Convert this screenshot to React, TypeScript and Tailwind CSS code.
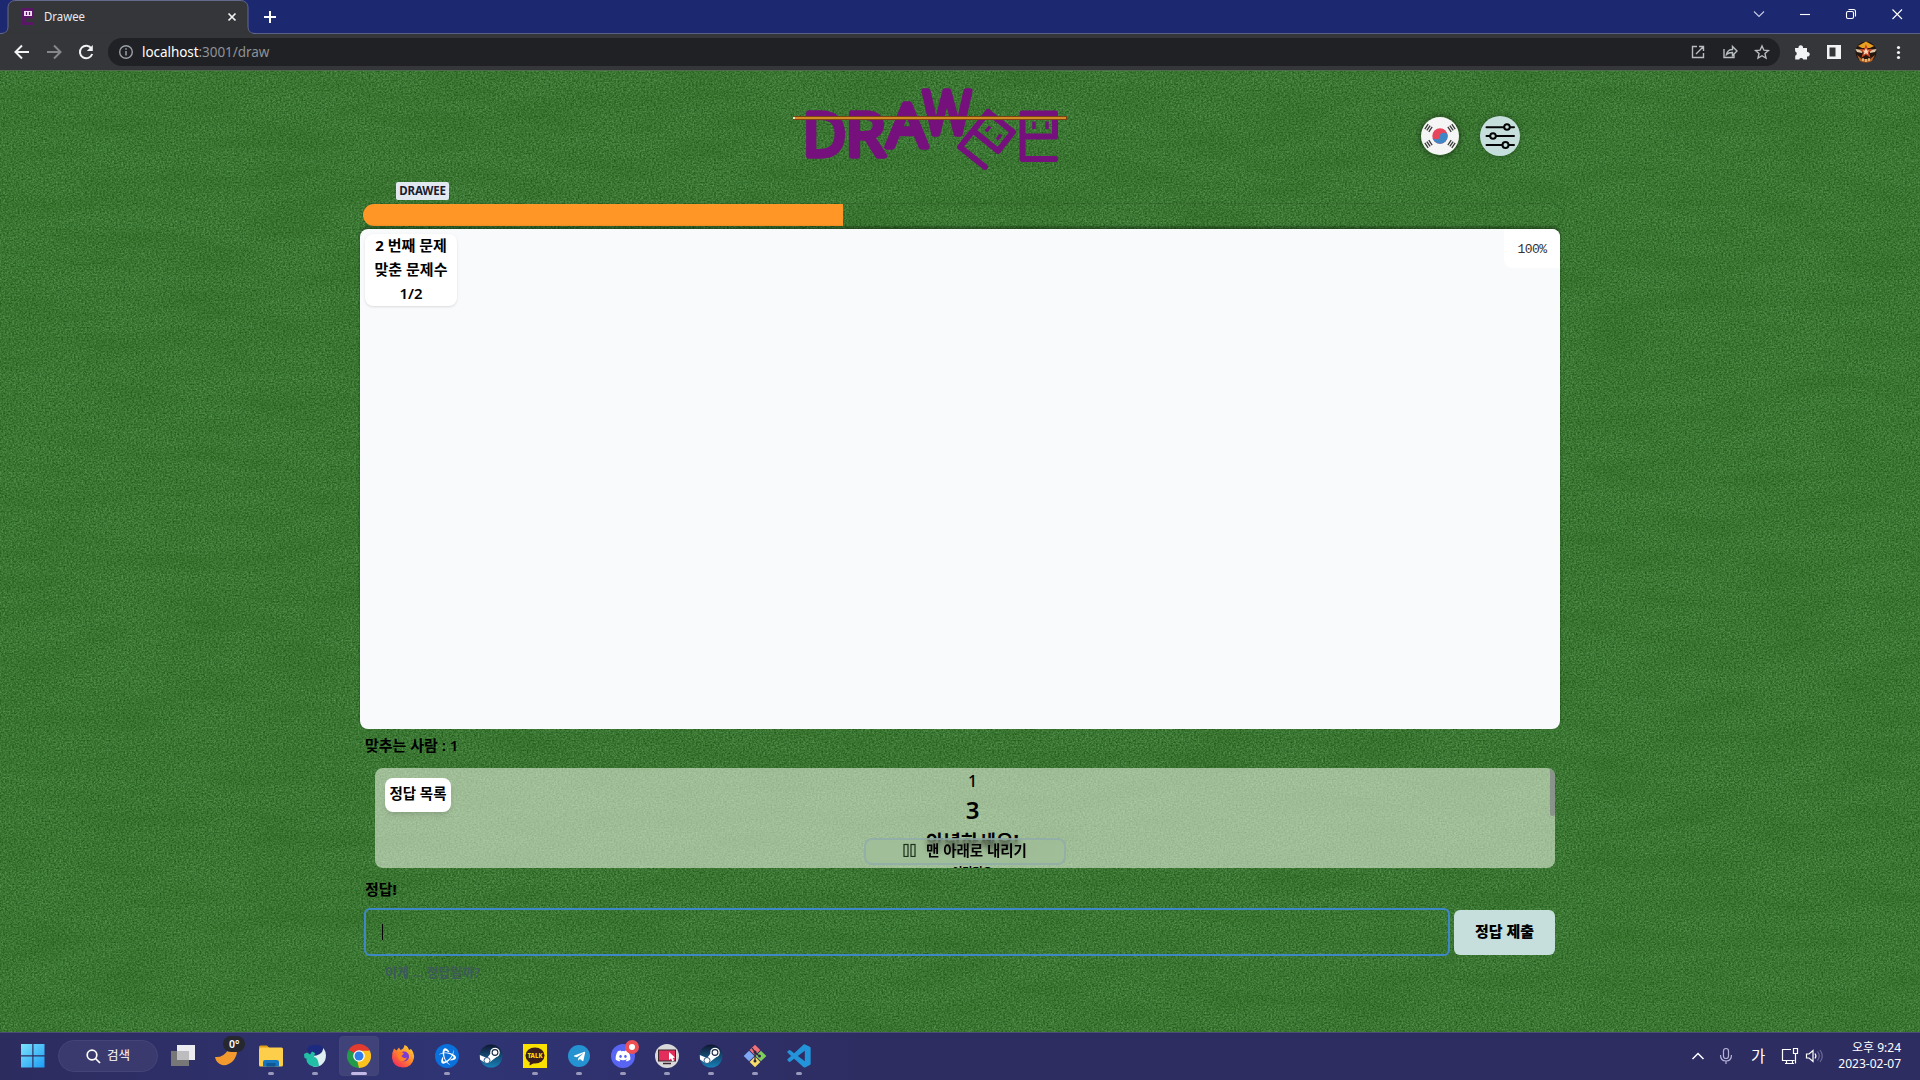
import React from "react";
import { FaDiscord, FaTelegramPlane } from "react-icons/fa";
import { SiBattledotnet } from "react-icons/si";
import { BiLogoVisualStudio } from "react-icons/bi";

const UI = "font-['Noto_Sans','Noto_Sans_CJK_KR',sans-serif]";
const KR = "font-['Noto_Sans','Noto_Sans_CJK_KR',sans-serif]";

function Grass() {
  return (
    <svg className="absolute inset-0 h-full w-full" aria-hidden="true">
      <defs>
        <filter id="weave" x="0" y="0" width="100%" height="100%" colorInterpolationFilters="sRGB">
          <feTurbulence type="fractalNoise" baseFrequency="0.55 0.62" numOctaves="2" seed="4" result="n" />
          <feColorMatrix
            in="n"
            type="matrix"
            values="0.32 0 0 0 0.075  0.34 0 0 0 0.30  0.30 0 0 0 0.055  0 0 0 0 1"
          />
        </filter>
        <filter id="bands" x="0" y="0" width="100%" height="100%" colorInterpolationFilters="sRGB">
          <feTurbulence type="fractalNoise" baseFrequency="0.012 0.05" numOctaves="3" seed="9" />
          <feColorMatrix type="matrix" values="0 0 0 0 0.14  0 0 0 0 0.36  0 0 0 0 0.08  0.45 0 0 0 -0.16" />
        </filter>
      </defs>
      <rect width="100%" height="100%" filter="url(#weave)" />
      <rect width="100%" height="100%" filter="url(#bands)" />
    </svg>
  );
}

function Logo() {
  return (
    <svg width="280" height="100" viewBox="790 80 280 100" className="block">
      <g
        fill="#75107c"
        stroke="#75107c"
        strokeWidth="5.500"
        strokeLinejoin="round"
        strokeLinecap="round"
        fontFamily="'Open Sans', sans-serif"
        fontWeight="500"
        fontSize="61"
      >
        <text x="803" y="155.500" textLength="43" lengthAdjust="spacingAndGlyphs">D</text>
        <text x="845.500" y="155.500" textLength="40" lengthAdjust="spacingAndGlyphs">R</text>
        <text x="887" y="147" textLength="40" lengthAdjust="spacingAndGlyphs">A</text>
        <text x="923" y="133.500" textLength="48" lengthAdjust="spacingAndGlyphs">W</text>
      </g>
      <g fill="none" stroke="#75107c" strokeWidth="6" strokeLinecap="round" strokeLinejoin="round">
        <path d="M985 167 L960 147 L988 112 L1013 132 L998 151 L976 133" />
        <path d="M1055 159 H1022.500 V113.500 H1055 V136.500 H1024" />
      </g>
      <path d="M990 126.500 l-4 5 M1001 134.500 l-4 5 M1034 121.500 v7.500 M1047 121.500 v7.500" stroke="#75107c" strokeWidth="3.500" />
      <path d="M793 118 H1067" stroke="#7a4212" strokeWidth="4" />
      <path d="M794 118 H1066" stroke="#d08a26" strokeWidth="2" />
      <rect x="793" y="117" width="2" height="2" fill="#f3e3c0" />
    </svg>
  );
}

function Flag() {
  const bars = (x: number, y: number, r: number) => (
    <path d="M-3 -2.400 H3 M-3 0 H3 M-3 2.400 H3" transform={`translate(${x} ${y}) rotate(${r})`} stroke="#3a3a3a" strokeWidth="1.300" />
  );
  return (
    <svg width="38" height="38" viewBox="0 0 38 38" className="block">
      <circle cx="19" cy="19" r="19" fill="#f5f5f5" />
      <circle cx="19" cy="19" r="7.700" fill="#e8455b" />
      <path d="M11.300 19 a3.850 3.200 0 0 0 7.700 0 a3.850 3.200 0 0 1 7.700 0 a7.700 7.700 0 0 1 -15.400 0" fill="#3f86c4" />
      {bars(7.5, 11, -56)}
      {bars(30.5, 11, 56)}
      {bars(7.5, 27, 56)}
      {bars(30.5, 27, -56)}
    </svg>
  );
}

function Sliders() {
  return (
    <svg width="40" height="40" viewBox="0 0 40 40" className="block">
      <g stroke="#050505" strokeWidth="2" strokeLinecap="round" fill="#c6dfdc">
        <path d="M6.500 11.300 H34 M6.500 20 H34 M6.500 29 H34" />
        <circle cx="27" cy="11" r="2.800" />
        <circle cx="13" cy="20" r="2.800" />
        <circle cx="25.500" cy="29" r="3" />
      </g>
    </svg>
  );
}

function BrowserChrome() {
  return (
    <div className={`flex h-[70px] flex-col ${UI}`}>
      <div className="flex h-[34px] items-end border-b border-[#5a6088] bg-[#1c286f]">
        <svg width="256" height="34" viewBox="0 0 256 34" className="-mb-px block shrink-0">
          <path d="M0 33.500 C6 33.500 8 31 8 26 V8 C8 3 11 .5 16 .5 H240 C245 .5 248 3 248 8 V26 C248 31 250 33.500 256 33.500 V35 H0Z" fill="#35363a" stroke="#646a8c" />
          <path d="M4 33.500 H252" stroke="#35363a" strokeWidth="1.500" />
          <rect x="22" y="8" width="12" height="17" fill="#5b1767" />
          <rect x="24" y="11" width="8" height="5" fill="#f4dcf4" />
          <path d="M26.500 12 v3 M29.500 12 v3" stroke="#5b1767" strokeWidth="1.200" />
          <path d="M25 18.500 H34 V22 H25Z" fill="#35363a" />
          <text x="44" y="21" fill="#e8eaed" fontSize="12.500" textLength="41" lengthAdjust="spacingAndGlyphs">Drawee</text>
          <path d="M228.500 13.500 l7 7 M235.500 13.500 l-7 7" stroke="#f2f2f2" strokeWidth="1.700" />
        </svg>
        <svg width="30" height="33" viewBox="0 0 30 33" className="block">
          <path d="M14 11 V23 M8 17 H20" stroke="#fff" strokeWidth="2" />
        </svg>
        <svg width="180" height="33" viewBox="1740 0 180 33" className="ml-auto block" fill="none" stroke="#fff" strokeWidth="1.100">
          <path d="M1754 11.500 l5 5 l5 -5" stroke="#c9cde4" />
          <path d="M1800 14.500 h10" />
          <rect x="1846.500" y="11.500" width="7" height="7" rx="1.500" />
          <path d="M1848.500 9.500 h5 q2 0 2 2 v5" />
          <path d="M1892.500 9.500 l9.500 9.500 M1902 9.500 l-9.500 9.500" />
        </svg>
      </div>
      <div className="flex h-9 items-center bg-[#35363a]">
        <svg width="108" height="36" viewBox="0 34 108 36" className="block shrink-0" fill="none" strokeWidth="2">
          <path d="M29 52 H16 M22 45.500 L15.500 52 L22 58.500" stroke="#f1f3f4" />
          <path d="M47 52 H60 M54 45.500 L60.500 52 L54 58.500" stroke="#85878a" />
          <path d="M91.500 48.500 A6.300 6.300 0 1 0 92.200 54" stroke="#f1f3f4" />
          <path d="M92.800 45 V51 H86.800Z" fill="#f1f3f4" />
        </svg>
        <div className="flex h-7 w-[1672px] items-center rounded-full bg-[#202124]">
          <svg width="34" height="28" viewBox="0 0 34 28" className="block">
            <circle cx="18" cy="14" r="6.300" fill="none" stroke="#9aa0a6" strokeWidth="1.400" />
            <path d="M18 13 V17.500 M18 10.200 V11.800" stroke="#9aa0a6" strokeWidth="1.500" />
          </svg>
          <span className="w-[127px] text-[13.5px] tracking-[-0.06px] whitespace-nowrap text-[#8e9297]">
            <span className="text-white">localhost</span>:3001/draw
          </span>
          <svg width="90" height="28" viewBox="1690 38 90 28" className="ml-auto block" fill="none" stroke="#b9bcc0" strokeWidth="1.400">
            <path d="M1697 46.500 h-4.500 v11 h11 v-4.500 M1699 46.500 h4.500 v4.500 M1703 47 l-7 7" />
            <path d="M1724 49 v8.500 h10 v-3 M1726.500 54.500 q1 -5 6 -5 v-3 l4.500 4.500 l-4.500 4.500 v-3 q-4 0 -6 2z" />
            <path d="M1762 46 l1.900 4.200 l4.500 .4 l-3.400 3 l1 4.500 l-4 -2.400 l-4 2.400 l1 -4.500 l-3.400 -3 l4.500 -.4z" />
          </svg>
        </div>
        <svg width="140" height="36" viewBox="1780 34 140 36" className="block">
          <path d="M1795 48 h3.500 a2.300 2.300 0 1 1 4.500 0 h4 v4 a2.300 2.300 0 1 1 0 4.500 v3 h-3.800 a2.100 2.100 0 0 0 -4 0 h-4 v-3.700 a2.200 2.200 0 0 0 0 -4.200z" fill="#f1f3f4" />
          <path d="M1827 45 h14 v14 h-14z M1829.500 47.500 v9 h6 v-9z" fill="#f1f3f4" fillRule="evenodd" />
          <circle cx="1866" cy="52" r="10.500" fill="#24150f" />
          <path d="M1858 46 L1866 41.500 L1874 46 L1870 48 H1862Z" fill="#e9a021" />
          <path d="M1857 55 L1862 59 H1870 L1875 55 L1872 61 Q1866 64 1860 61Z" fill="#b5652a" />
          <path d="M1855.500 49 L1863 50 L1862 53 L1857 52Z M1876.500 49 L1869 50 L1870 53 L1875 52Z" fill="#d9c9a8" />
          <path d="M1866 46 l1.500 3.800 h3.900 l-3.100 2.500 l1.200 4 l-3.500 -2.400 l-3.500 2.400 l1.200 -4 l-3.100 -2.500 h3.900z" fill="#ffd9b8" stroke="#c2401f" strokeWidth="1.200" />
          <path d="M1863 58 v3 M1869 58 v3 M1866 59 v3" stroke="#ffe3a0" strokeWidth="1.200" />
          <circle cx="1898.500" cy="47.500" r="1.600" fill="#f1f3f4" />
          <circle cx="1898.500" cy="52.500" r="1.600" fill="#f1f3f4" />
          <circle cx="1898.500" cy="57.500" r="1.600" fill="#f1f3f4" />
        </svg>
      </div>
    </div>
  );
}

function Game() {
  return (
    <main className={`relative h-[962px] overflow-hidden border-t border-[#4d6b4d] bg-[#3b7633] text-black ${KR}`}>
      <Grass />
      <div className="relative mx-auto flex w-[1200px] flex-col">
        <header className="flex h-[111px] items-start pt-[9px]">
          <div className="ml-[430px]">
            <Logo />
          </div>
          <button className="mt-[37px] ml-[351px] rounded-full shadow-[0_0_6px_1px_rgba(0,0,0,0.45)]">
            <Flag />
          </button>
          <button className="mt-[36px] ml-[21px] rounded-full bg-[#c6dfdc] shadow-[0_0_6px_rgba(0,0,0,0.3)]">
            <Sliders />
          </button>
        </header>

        <div className="ml-9 flex h-[18px] w-[53px] items-center justify-center rounded-[2px] bg-[#e2e8f0] text-[11.5px] font-bold tracking-[-0.2px] text-[#1a202c]">
          DRAWEE
        </div>
        <div className="mt-1 ml-[3px] h-[22px] w-[1200px] overflow-hidden rounded-full shadow-[0_0_2px_rgba(0,0,0,0.35)]">
          <div className="h-full w-[480px] bg-[#ff9626]" />
        </div>

        <section className="mt-[3px] flex h-[500px] items-start justify-between overflow-hidden rounded-lg bg-[#f8fafc] shadow-[0_-2px_3px_rgba(0,0,0,0.4)]">
          <div className="mt-[5px] ml-[5px] flex h-[72px] w-[92px] flex-col items-center justify-center rounded-lg bg-white pb-[3px] text-[15px] leading-6 font-bold shadow">
            <span className="whitespace-nowrap">2 번째 문제</span>
            <span className="whitespace-nowrap">맞춘 문제수</span>
            <span className="font-semibold">1/2</span>
          </div>
          <div className="flex h-[39px] w-[56px] items-center justify-center rounded-bl-lg bg-white text-[#333]">
            <span className="pt-0.5 font-['Liberation_Mono',monospace] text-[13px] tracking-[-0.6px]">100%</span>
          </div>
        </section>

        <p className="mt-1 ml-[5px] h-6 text-[15px] leading-6 font-semibold">맞추는 사람 : 1</p>

        <section className="relative mt-[11px] ml-[15px] h-[100px] w-[1180px] overflow-hidden rounded-lg bg-[#f2f7ea]/55">
          <div className="flex flex-col items-center pl-[15px]">
            <span className="h-[26px] text-[16px] leading-[26px] font-medium">1</span>
            <span className="h-8 text-[24px] leading-8 font-semibold">3</span>
            <span className="h-8 text-[19px] leading-8 font-bold">안녕하세요!</span>
            <span className="mt-0.5 h-6 text-[11px] leading-6 font-bold">어리리요</span>
          </div>
          <div className="absolute top-[10px] left-[10px] flex h-[34px] w-[66px] items-center justify-center rounded-lg bg-white pb-0.5 text-[14.5px] font-bold whitespace-nowrap shadow-md">
            정답 목록
          </div>
          <button className="absolute top-[70px] left-[489px] flex h-[27px] w-[202px] items-center justify-center gap-2.5 rounded-lg border-2 border-[#8fa9ad]/70 bg-[#a2c09c]/30 pb-[3px] text-[14.5px] font-bold backdrop-blur-[3px]">
            <svg width="13" height="14" viewBox="0 0 13 14" fill="none" stroke="#1c301c" strokeWidth="1.200">
              <rect x="1" y="1.500" width="4" height="12" />
              <rect x="8" y="1.500" width="4" height="12" />
            </svg>
            <span className="leading-5 whitespace-nowrap">맨 아래로 내리기</span>
          </button>
          <div className="absolute top-0 right-0 h-12 w-[5px] rounded-full bg-[#8a938a]" />
        </section>

        <p className="mt-[9px] ml-[5px] h-6 text-[15px] leading-6 font-bold">정답!</p>
        <div className="mt-[7px] ml-1 flex items-center gap-1">
          <div className="flex h-[48px] w-[1086px] items-center rounded-md border-2 border-[#3f88c8] pl-4">
            <span className="h-4 w-px bg-black" />
          </div>
          <button className="h-[45px] w-[101px] rounded-md bg-[#c6dfdc] pb-0.5 text-[15px] font-black whitespace-nowrap">정답 제출</button>
        </div>
        <p className="mt-[4px] ml-[25px] h-6 text-[13px] leading-6 font-semibold text-[#3f5560]/90">이게 ... 정답일까?</p>
      </div>
    </main>
  );
}

function Steam() {
  return (
    <svg width="24" height="24" viewBox="0 0 24 24">
      <defs>
        <linearGradient id="steam" x1="0" y1="0" x2="0" y2="1">
          <stop offset="0" stopColor="#10162f" />
          <stop offset="1" stopColor="#1780b8" />
        </linearGradient>
      </defs>
      <circle cx="12" cy="12" r="11.500" fill="url(#steam)" />
      <path d="M.8 11 L8 14 L12 9 L20 11 L11 18 L7 19.500 L1 15.500Z" fill="#fff" />
      <circle cx="16" cy="8.500" r="4.800" fill="#fff" />
      <circle cx="16" cy="8.500" r="2.900" fill="#fff" stroke="#1b2a48" strokeWidth="1.100" />
      <circle cx="8" cy="16.500" r="3" fill="#fff" stroke="#1b4a78" strokeWidth=".9" />
    </svg>
  );
}

function Chrome() {
  return (
    <svg width="24" height="24" viewBox="0 0 24 24">
      <path d="M12 12 L1.600 6 A12 12 0 0 1 22.400 6Z" fill="#e33b2e" />
      <path d="M12 12 L22.400 6 A12 12 0 0 1 12 24Z" fill="#fcc31e" />
      <path d="M12 12 V24 A12 12 0 0 1 1.600 6Z" fill="#229a4a" />
      <path d="M12 6.400 H22.600 L17 14.500Z" fill="#fcc31e" />
      <path d="M12 6.400 H22.600 L22.400 6 A12 12 0 0 0 20 3 L12 4Z" fill="#e33b2e" />
      <path d="M16.900 14.800 L12 24 L10 16Z" fill="#fcc31e" />
      <circle cx="12" cy="12" r="5.800" fill="#fff" />
      <circle cx="12" cy="12" r="4.500" fill="#2f7de9" />
    </svg>
  );
}

function Firefox() {
  return (
    <svg width="24" height="24" viewBox="0 0 24 24">
      <defs>
        <linearGradient id="fox" x1="1" y1="0" x2="0.200" y2="1">
          <stop offset="0" stopColor="#ffe23e" />
          <stop offset=".5" stopColor="#ff8a2a" />
          <stop offset="1" stopColor="#f5275f" />
        </linearGradient>
      </defs>
      <path d="M3 4.500 L5.500 6.500 L8 3.500 L9.500 6 Q13 5 13.500 1 Q17 2 18 6 L20 5 Q23.500 9 23 14 Q21 23.500 12 23.500 Q2 23 1 14 Q.6 9 3 4.500Z" fill="url(#fox)" />
      <circle cx="13" cy="12.500" r="5" fill="#7b3bd6" />
      <path d="M6 9 Q10 7 13 9.500 L10.500 12 Q12 15 16 13.500 Q14 18 10 17 Q6 15 6 9Z" fill="#ff8124" />
    </svg>
  );
}

const apps: { icon: React.ReactNode; mark?: "dot" | "bar" }[] = [
  {
    icon: (
      <svg width="26" height="24" viewBox="0 0 26 24">
        <rect x="1" y="7" width="18" height="15" fill="#777778" />
        <rect x="7" y="1" width="18" height="15" fill="#ececf0" />
        <rect x="7" y="7" width="12" height="9" fill="#bdbdc0" />
      </svg>
    ),
  },
  {
    icon: (
      <svg width="36" height="34" viewBox="1 0 36 34" className="-translate-y-1">
        <path d="M7 22 Q15 23 20 15 L29 16 Q29 21 25 26 Q20 31 14 30 Q8 28 7 22Z" fill="#f29a2e" />
        <rect x="15" y="1" width="22" height="16" rx="8" fill="#272730" />
        <text x="21" y="13" fill="#fff" fontSize="10.500" fontFamily="Noto Sans, sans-serif" fontWeight="600">0°</text>
      </svg>
    ),
  },
  {
    icon: (
      <svg width="26" height="24" viewBox="0 0 26 24">
        <path d="M1 3 Q1 1.500 2.500 1.500 H9 L11.500 4 H1Z" fill="#e09d17" />
        <rect x="1" y="3.500" width="24" height="19" rx="1.500" fill="#fcce49" />
        <path d="M5 22.500 V18 Q5 16 7 16 H19 Q21 16 21 18 V22.500Z" fill="#1675c0" />
        <rect x="8.500" y="19" width="9" height="3.500" fill="#0d5795" />
      </svg>
    ),
    mark: "dot",
  },
  {
    icon: (
      <svg width="24" height="24" viewBox="0 0 24 24">
        <path d="M4 6 Q5 1 9 1.500 Q17 -1 20 4 Q19 9 14 11 L8 11Z" fill="#1c2a80" />
        <path d="M9 12 Q19 12 20.500 4 Q24.500 10 22 16.500 Q18 24 10 22.500Z" fill="#dff0f0" />
        <path d="M1.500 14 L1 10 L4 8.500 L7 10.500 L9 7.500 L12 9 L11 13 Q15 13 16 22 Q11 24 6.500 21 Q3 18 3.500 14.500Z" fill="#21bfa5" />
      </svg>
    ),
    mark: "dot",
  },
  { icon: <Chrome />, mark: "bar" },
  { icon: <Firefox /> },
  {
    icon: (
      <span className="flex h-6 w-6 items-center justify-center rounded-full bg-[#0a70dc]">
        <SiBattledotnet size={17} color="#fff" />
      </span>
    ),
    mark: "dot",
  },
  { icon: <Steam /> },
  {
    icon: (
      <svg width="24" height="24" viewBox="0 0 24 24">
        <rect width="24" height="24" fill="#fae100" />
        <ellipse cx="12" cy="11.500" rx="9.500" ry="8" fill="#3a1d1d" />
        <path d="M7 16 L6.500 21.500 L13 18Z" fill="#3a1d1d" />
        <text x="4.500" y="14" fill="#fae100" fontSize="6.500" fontWeight="800" fontFamily="Noto Sans, sans-serif" textLength="15" lengthAdjust="spacingAndGlyphs">TALK</text>
      </svg>
    ),
    mark: "dot",
  },
  {
    icon: (
      <span className="flex h-[22px] w-[22px] items-center justify-center rounded-full bg-[#2593d1]">
        <FaTelegramPlane size={13} color="#fff" />
      </span>
    ),
    mark: "dot",
  },
  {
    icon: (
      <span className="relative flex h-6 w-6 items-center justify-center rounded-full bg-[#5865f2]">
        <FaDiscord size={16} color="#fff" />
        <span className="absolute -top-1 left-[14px] flex h-[14px] w-[14px] items-center justify-center rounded-full bg-[#ee4f55]">
          <span className="h-1.5 w-1.5 rounded-full bg-white" />
        </span>
      </span>
    ),
    mark: "dot",
  },
  {
    icon: (
      <svg width="24" height="24" viewBox="0 0 24 24">
        <circle cx="12" cy="12" r="12" fill="#d9d9da" />
        <rect x="3.500" y="6" width="17" height="11" fill="#e32d5b" stroke="#3d2730" strokeWidth="1" />
        <path d="M8 19.500 H16" stroke="#3d2730" strokeWidth="1.500" />
        <path d="M14 8 V16 L16 14.500 L17.500 17.500 L19 16.500 L17.800 14 L20 13.500Z" fill="#fff" />
      </svg>
    ),
    mark: "dot",
  },
  { icon: <Steam />, mark: "dot" },
  {
    icon: (
      <svg width="24" height="24" viewBox="0 0 24 24">
        <g transform="rotate(45 12 12)">
          <rect x="4" y="4" width="7.600" height="7.600" fill="#f07178" />
          <rect x="12.400" y="4" width="7.600" height="7.600" fill="#7fce5c" />
          <rect x="4" y="12.400" width="7.600" height="7.600" fill="#7fa8f5" />
          <rect x="12.400" y="12.400" width="7.600" height="7.600" fill="#f8dd6a" />
        </g>
        <path d="M9 4 L12 8 V17 M12 8 L16 12" stroke="#2b2640" strokeWidth="1.200" fill="none" />
        <circle cx="12" cy="17" r="1.500" fill="#2b2640" />
        <circle cx="12" cy="8" r="1.500" fill="#2b2640" />
        <circle cx="16.500" cy="12" r="1.500" fill="#2b2640" />
      </svg>
    ),
    mark: "dot",
  },
  { icon: <BiLogoVisualStudio size={28} color="#2494da" />, mark: "dot" },
];

function Taskbar() {
  return (
    <footer className={`flex h-12 items-center border-t border-[#4c4a76] bg-linear-to-r from-[#2d2c5f] via-[#2f3474] via-[24%] to-[#2e2d62] to-[45%] pb-px text-white ${UI}`}>
      <svg width="24" height="24" viewBox="0 0 24 24" className="ml-[21px] block">
        <defs>
          <linearGradient id="win" x1="0" y1="0" x2="1" y2="1">
            <stop offset="0" stopColor="#7be3fb" />
            <stop offset="1" stopColor="#1c9cf5" />
          </linearGradient>
        </defs>
        <path d="M0 0 H11.300 V11.300 H0Z M12.500 0 H23.500 V11.300 H12.500Z M0 12.500 H11.300 V23.500 H0Z M12.500 12.500 H23.500 V23.500 H12.500Z" fill="url(#win)" />
      </svg>
      <div className="ml-[13px] flex h-8 w-[100px] items-center justify-center gap-1.5 rounded-full border border-[#45447a] bg-[#3b3a6e] text-[12.5px]">
        <svg width="15" height="15" viewBox="0 0 15 15" fill="none" stroke="#fff" strokeWidth="1.700">
          <circle cx="6" cy="6" r="4.800" />
          <path d="M9.500 9.500 L14 14" />
        </svg>
        <span className="whitespace-nowrap">검색</span>
      </div>
      <div className="ml-[3px] flex">
        {apps.map((a, i) => (
          <div key={i} className="flex h-[46px] w-11 items-center justify-center">
            <div className={`relative flex h-10 w-10 items-center justify-center rounded ${a.mark === "bar" ? "border border-[#454678] bg-[#404379]" : ""}`}>
              {a.icon}
              {a.mark === "dot" && <span className="absolute bottom-px h-[3px] w-1.5 rounded-full bg-[#9a99bb]" />}
              {a.mark === "bar" && <span className="absolute bottom-0 h-[3px] w-4 rounded-full bg-[#c3b8e6]" />}
            </div>
          </div>
        ))}
      </div>
      <svg width="136" height="46" viewBox="1688 1033 136 46" className="ml-auto block" fill="none" stroke="#fff" strokeWidth="1.200">
        <path d="M1692.500 1059 l5.500 -5.500 l5.500 5.500" strokeWidth="1.500" />
        <rect x="1723.500" y="1048.500" width="5" height="10" rx="2.500" stroke="#b6b3d8" />
        <path d="M1720.500 1055 q0 6 5.500 6 q5.500 0 5.500 -6 M1726 1061 v3" stroke="#b6b3d8" />
        <text x="1751" y="1062" fill="#fff" stroke="none" fontSize="15.500" fontFamily="Noto Sans CJK KR, sans-serif">가</text>
        <path d="M1791 1049.500 h-8.500 v11 h12 M1785 1063.500 h9 M1786.500 1060.500 v3 M1792.500 1060.500 v3 M1793.500 1048.500 h4 v5 h-4z M1795.500 1053.500 v10" />
        <path d="M1806.500 1054 h2.500 l4 -3.500 v11 l-4 -3.500 h-2.500z M1815 1053.500 q1.800 2.500 0 5" />
        <path d="M1817.500 1051.500 q3.500 4.500 0 9 M1820 1050 q4.500 6 0 12" stroke="#6d6b98" />
      </svg>
      <div className="mr-[19px] ml-[9px] flex w-[68px] flex-col items-end pb-px text-[12px] leading-4 whitespace-nowrap">
        <span>오후 9:24</span>
        <span>2023-02-07</span>
      </div>
    </footer>
  );
}

export default function App() {
  return (
    <div className="flex h-[1080px] w-[1920px] flex-col overflow-hidden">
      <BrowserChrome />
      <Game />
      <Taskbar />
    </div>
  );
}
